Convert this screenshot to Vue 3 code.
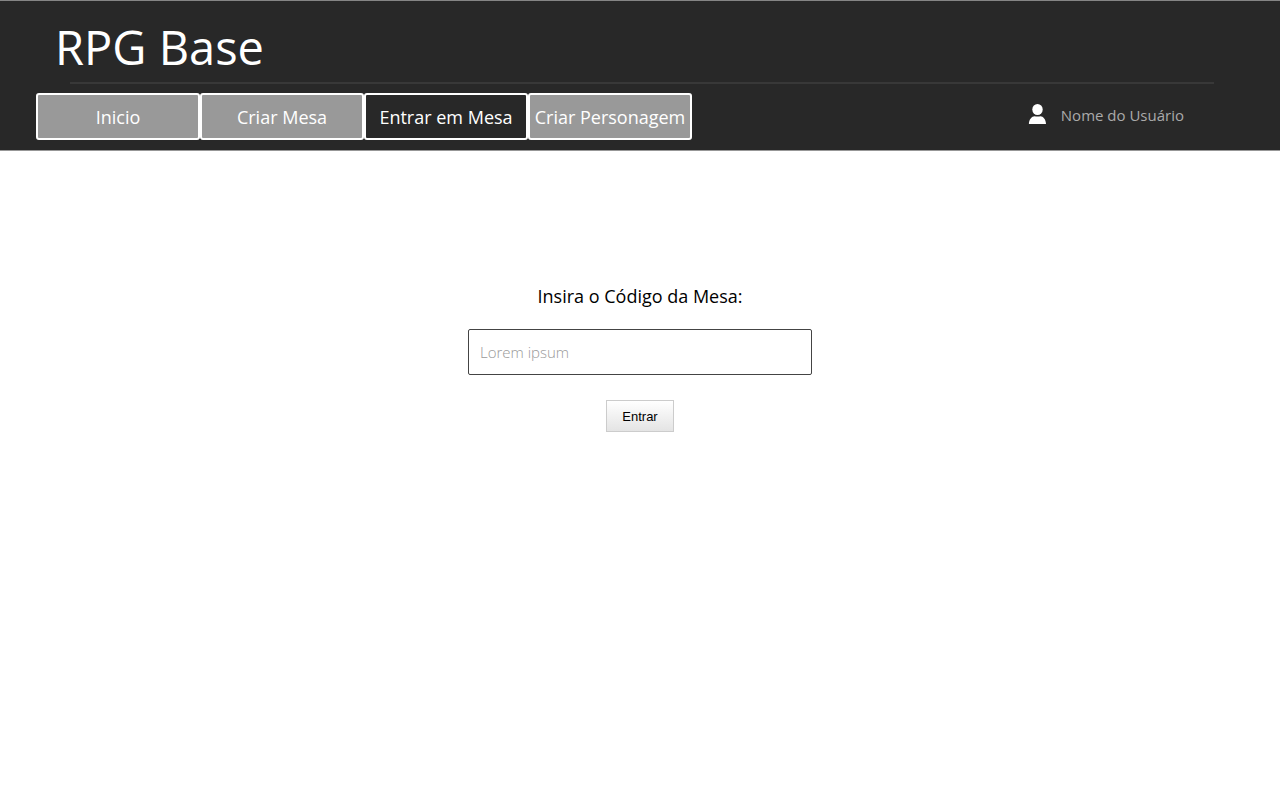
<script setup>
import { ref } from 'vue'

const items = ['Inicio', 'Criar Mesa', 'Entrar em Mesa', 'Criar Personagem']
const current = ref('Entrar em Mesa')
const code = ref('')
</script>

<template>
  <header class="header">
    <h1 class="title">RPG Base</h1>
    <hr class="rule" />
    <div class="bar">
      <nav class="nav">
        <button
          v-for="item in items"
          :key="item"
          type="button"
          class="tab"
          :class="{ active: item === current }"
          @click="current = item"
        >{{ item }}</button>
      </nav>
      <div class="user">
        <svg class="avatar" width="18" height="20" viewBox="0 0 18 20" aria-hidden="true">
          <ellipse cx="9.5" cy="5.5" rx="5.2" ry="5.5" fill="#fff" />
          <path d="M.9 20C.9 15.5 4 12.2 6.5 12.2Q9.5 13 12.5 12.2C15 12.2 18 15.5 18 20Z" fill="#fff" />
        </svg>
        <span>Nome do Usuário</span>
      </div>
    </div>
  </header>
  <main>
    <form class="form" @submit.prevent>
      <label class="label" for="code">Insira o Código da Mesa:</label>
      <input id="code" v-model="code" class="field" type="text" placeholder="Lorem ipsum" />
      <button class="submit" type="submit">Entrar</button>
    </form>
  </main>
</template>

<style>
body {
  background: #fff;
}
</style>

<style scoped>
.header,
.form {
  font-family: "Open Sans", sans-serif;
}
.header {
  background: #282828;
  border-top: 1px solid #858585;
  border-bottom: 1px solid #979797;
  padding: 13px 36px 10px;
}
.title {
  margin: 0 0 2px 19px;
  color: #fff;
  font-size: 47px;
  font-weight: 400;
  line-height: 66px;
}
.rule {
  height: 2px;
  margin: 0 30px 9px 34px;
  border: 0;
  background: #383838;
}
.bar {
  display: flex;
  justify-content: space-between;
}
.nav {
  display: flex;
}
.tab {
  width: 164px;
  height: 47px;
  padding: 0;
  border: 2px solid #fff;
  border-radius: 3px;
  background: #999;
  color: #fff;
  font-family: inherit;
  font-size: 18px;
  line-height: 24px;
  white-space: nowrap;
}
.tab.active {
  background: #282828;
}
.user {
  display: flex;
  gap: 15px;
  margin-right: 60px;
  padding-top: 11px;
  color: #aaa;
  font-size: 15px;
  line-height: 22px;
}
.form {
  display: flex;
  flex-direction: column;
  align-items: center;
  padding: 133px 20px 20px;
}
.label {
  margin-bottom: 20px;
  color: #000;
  font-size: 18px;
  line-height: 25px;
}
.field {
  box-sizing: border-box;
  width: 344px;
  max-width: 100%;
  height: 46px;
  margin-bottom: 25px;
  padding: 0 11px;
  border: 1px solid #444;
  border-radius: 2px;
  background: #fff;
  color: #333;
  font-family: inherit;
  font-size: 15px;
  font-weight: 300;
}
.field::placeholder {
  color: #999;
  opacity: 1;
}
.submit {
  height: 32px;
  padding: 0 15px;
  border: 1px solid #ccc;
  background: linear-gradient(#fff, #e4e4e4);
  color: #000;
  font-family: "Liberation Sans", Arial, sans-serif;
  font-size: 13px;
}
</style>
